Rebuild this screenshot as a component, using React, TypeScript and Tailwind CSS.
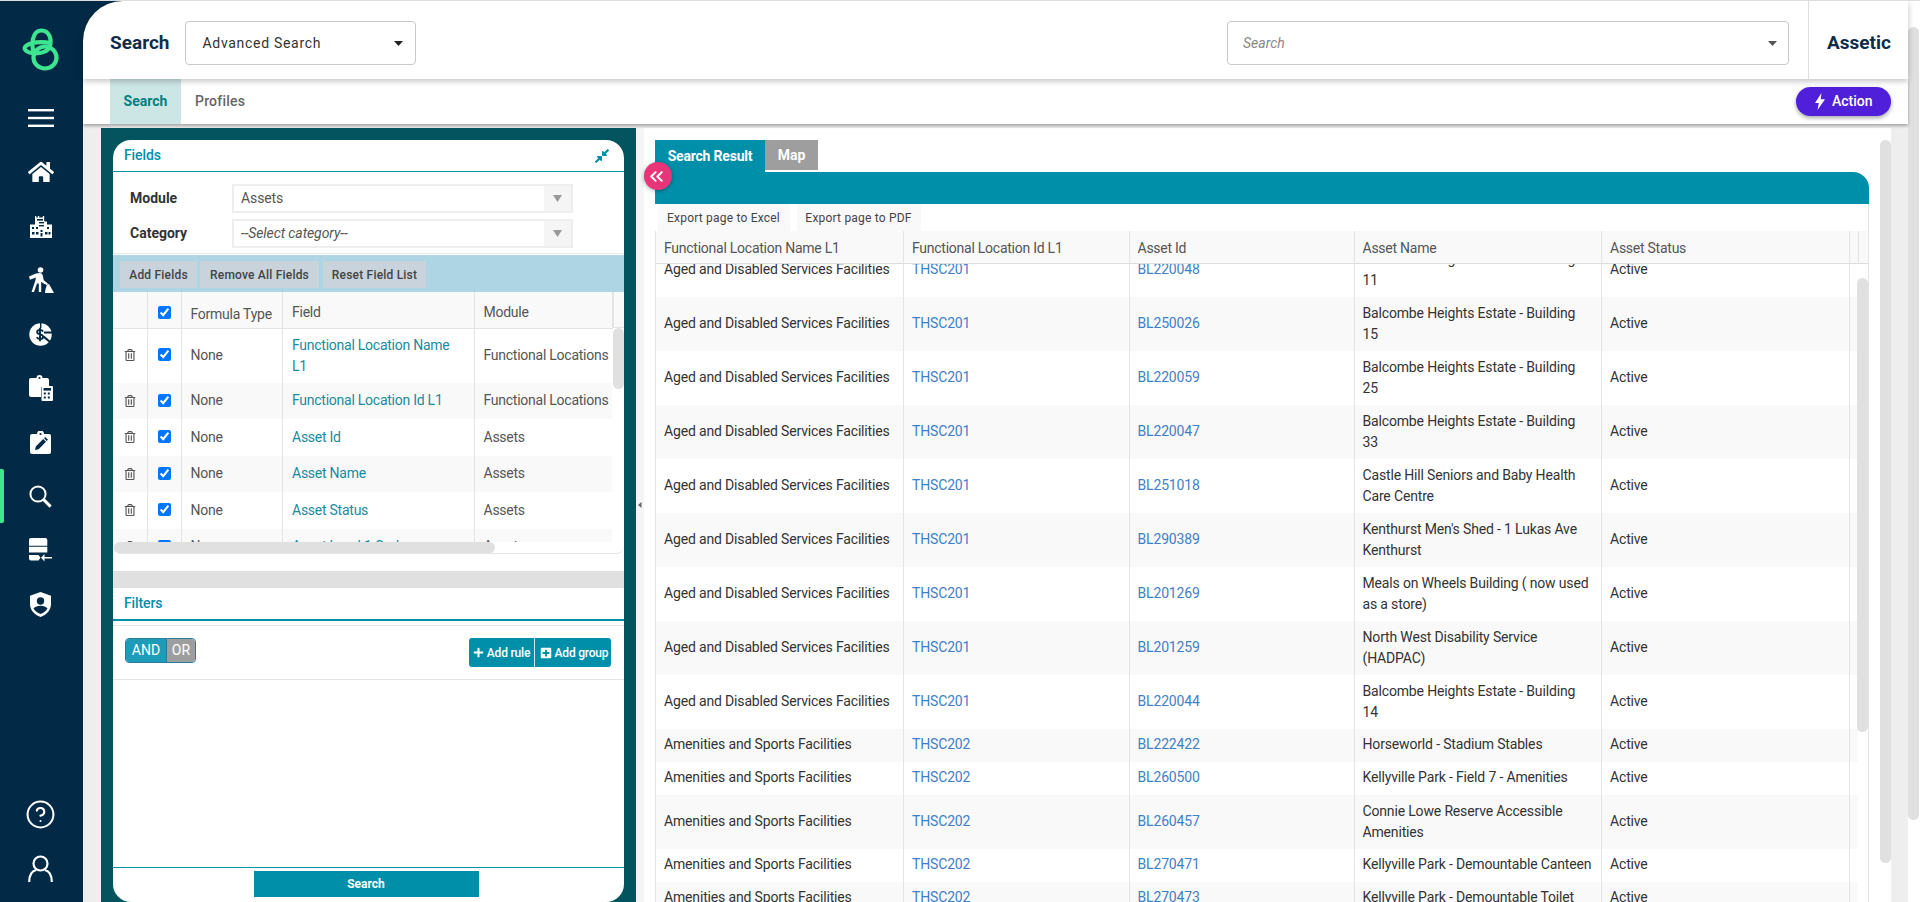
import React from "react";
import { FaHome, FaRegTrashAlt, FaCompressAlt, FaPlus, FaPlusSquare } from "react-icons/fa";
import { ChevronsLeft, CircleHelp } from "lucide-react";

const NAVY = "#022a47";

const Logo = () => (
  <svg width="55" height="55" viewBox="0 0 55 55" fill="none" stroke="#3de58f" strokeWidth="4.2" strokeLinecap="round">
    <ellipse cx="31" cy="36.5" rx="11.5" ry="11" />
    <path d="M20 33 C17 24 18 10 27 9.5 C35 9 38 18 36 25 C34 31 26 33 18 32 C11 31 9 27 12 25 C16 21.5 27 20 36 22" />
  </svg>
);

const Hamburger = () => (
  <svg width="26" height="18" viewBox="0 0 26 18" fill="#fff">
    <rect y="0" width="26" height="2.4" />
    <rect y="7.8" width="26" height="2.4" />
    <rect y="15.6" width="26" height="2.4" />
  </svg>
);

const BuildingIcon = () => (
  <svg width="24" height="23" viewBox="0 0 24 23">
    <path fill="#fff" d="M6 7V1h1.2v1.6h1.6V1h1.4v1.6h3.6V1h1.4v5.4H18v3.2h5V23H1V9.6h5z" />
    <g fill={NAVY}>
      <rect x="8" y="4" width="6" height="1.6" />
      <rect x="10" y="7" width="5" height="1.4" />
      <rect x="10" y="10" width="5" height="1.4" />
      <rect x="3" y="12" width="2" height="2" />
      <rect x="7" y="12" width="2" height="2" />
      <rect x="18" y="12" width="2" height="2" />
      <rect x="3" y="17" width="2.5" height="2.5" />
      <rect x="7" y="17" width="2.5" height="2.5" />
      <rect x="11.5" y="15" width="2" height="2" />
      <rect x="11.5" y="18" width="2" height="3.5" />
      <rect x="16" y="17" width="2.5" height="2.5" />
      <rect x="19.5" y="17" width="2" height="2.5" />
    </g>
  </svg>
);

const WorkerIcon = () => (
  <svg width="26" height="26" viewBox="0 0 26 26" fill="#fff">
    <circle cx="12.500" cy="3" r="2.800" />
    <path d="M1 9.500l7-3 3.500-.5c2 0 3 1 3.300 2.500l1 5.200 2.200 2-1.300 1.600-3.500-2.600v10.300h-2.400v-8.500h-1.800l-3 8.500H3.500l3.800-11.200.6-3.300-6 2.200z" />
    <path d="M21 17l5 9h-9l.6-4.300 1.400-4z" />
    <path d="M9 10l1-1.700 10 8.500-1.400 1.500z" />
  </svg>
);

const DollarIcon = () => (
  <svg width="24" height="23" viewBox="0 0 24 23">
    <circle cx="11.5" cy="11.5" r="11.2" fill="#fff" />
    <path fill={NAVY} d="M11 0h1.4v5H11zM15 8.4h9v2h-9zM15 12.4l7 6-1.4 1.6-6.6-5.4z" />
    <path fill="none" stroke={NAVY} strokeWidth="1.9" d="M14 8.6c-.6-1.2-1.6-1.7-3-1.7-1.7 0-2.9.9-2.9 2.2 0 3 6 1.6 6 4.6 0 1.4-1.3 2.3-3 2.3-1.5 0-2.7-.6-3.3-1.9M11 4.8v13.4" />
  </svg>
);

const ClipCalcIcon = () => (
  <svg width="24" height="26" viewBox="0 0 24 26">
    <path fill="#fff" d="M2 3h5.5a3 3 0 0 1 6 0H18a2 2 0 0 1 2 2v7h-8v10H2a2 2 0 0 1-2-2V5a2 2 0 0 1 2-2z" />
    <circle cx="10.5" cy="3" r="1" fill={NAVY} />
    <rect x="12.5" y="11" width="11.5" height="15" rx="1" fill="#fff" />
    <rect x="14.5" y="13" width="7.5" height="2.6" fill={NAVY} />
    <g fill={NAVY}>
      <rect x="14.8" y="17.5" width="2" height="2" />
      <rect x="18.8" y="17.5" width="2" height="2" />
      <rect x="14.8" y="21.5" width="2" height="2" />
      <rect x="18.8" y="21.5" width="2" height="2" />
    </g>
  </svg>
);

const ClipEditIcon = () => (
  <svg width="21" height="23" viewBox="0 0 21 23">
    <path fill="#fff" d="M2 3h5a3.4 3.4 0 0 1 7 0h5a2 2 0 0 1 2 2v16a2 2 0 0 1-2 2H2a2 2 0 0 1-2-2V5a2 2 0 0 1 2-2z" />
    <circle cx="10.5" cy="3" r="1.1" fill={NAVY} />
    <path fill={NAVY} d="M5 19l.8-3.6 7.4-7.4 2.8 2.8-7.4 7.4zM14 7.2l1.2-1.2 2.8 2.8-1.2 1.2z" />
  </svg>
);

const SearchIcon = () => (
  <svg width="23" height="23" viewBox="0 0 23 23" fill="none" stroke="#fff">
    <circle cx="9" cy="9" r="7.6" strokeWidth="2" />
    <path d="M14.6 14.6l7 7" strokeWidth="3" />
  </svg>
);

const DataIcon = () => (
  <svg width="23" height="24" viewBox="0 0 23 24" fill="#fff">
    <path d="M2 0h14.300a2 2 0 0 1 2 2v5.700H0V2a2 2 0 0 1 2-2zM0 8.800h18.300v5.600H0zM0 17h9.500l2 2.800-2 2.800H2a2 2 0 0 1-2-2z" />
    <path d="M23 19h-7.500v-3L12 19.800l3.500 3.700v-3H23z" />
  </svg>
);

const ShieldIcon = () => (
  <svg width="21" height="25" viewBox="0 0 21 25">
    <path fill="#fff" d="M10.5 0L21 3.8V12c0 6.2-4.4 10.8-10.5 13C4.4 22.800 0 18.200 0 12V3.800z" />
    <circle cx="10.500" cy="9" r="3.700" fill={NAVY} />
    <path fill={NAVY} d="M3.500 16.500c1.500-2 4-2.800 7-2.800s5.500.8 7 2.800c-1.400 2.400-4 4.300-7 5.400-3-1.100-5.600-3-7-5.400z" />
  </svg>
);

const UserIcon = () => (
  <svg width="25" height="27" viewBox="0 0 25 27" fill="none" stroke="#fff" strokeWidth="2.2">
    <circle cx="12.500" cy="8.500" r="7" />
    <path d="M1.200 27c0-6.500 2.500-11 7-12M23.800 27c0-6.500-2.500-11-7-12" />
  </svg>
);

const Caret = ({ color = "#222" }: { color?: string }) => (
  <svg width="9" height="5" viewBox="0 0 9 5"><path d="M0 0h9L4.500 5z" fill={color} /></svg>
);

const NavItem = ({ children, active }: { children: React.ReactNode; active?: boolean }) => (
  <div className="relative flex h-[54px] items-center justify-center pr-[2px]">
    {active && <div className="absolute left-0 top-0 h-[54px] w-[4px] rounded-r-[2px] bg-[#3de58f]" />}
    {children}
  </div>
);

const Sidebar = () => (
  <div className="flex h-full w-[83px] shrink-0 flex-col bg-[#022a47]">
    <div className="flex h-[90px] shrink-0 items-center justify-center pt-[4px]"><Logo /></div>
    <NavItem><Hamburger /></NavItem>
    <NavItem><FaHome size={26} color="#fff" /></NavItem>
    <NavItem><BuildingIcon /></NavItem>
    <NavItem><WorkerIcon /></NavItem>
    <NavItem><DollarIcon /></NavItem>
    <NavItem><ClipCalcIcon /></NavItem>
    <NavItem><ClipEditIcon /></NavItem>
    <NavItem active><SearchIcon /></NavItem>
    <NavItem><DataIcon /></NavItem>
    <NavItem><ShieldIcon /></NavItem>
    <div className="flex-1" />
    <NavItem><CircleHelp size={31} color="#fff" strokeWidth={1.6} /></NavItem>
    <NavItem><UserIcon /></NavItem>
    <div className="h-[7px] shrink-0" />
  </div>
);

const Header = () => (
  <div className="relative z-20 bg-[#022a47]">
    <div className="flex h-[78px] items-center rounded-tl-[40px] bg-white pl-[27px] pt-[6px] shadow-[0_2px_6px_rgba(0,0,0,0.25)]">
      <div className="text-[19px] font-bold text-[#0f2d4a]">Search</div>
      <div className="ml-[16px] flex h-[44px] w-[231px] items-center justify-between rounded-[4px] border border-[#c8c8c8] pl-[16px] pr-[12px] text-[14px] tracking-[0.7px] text-[#333]">
        <span>Advanced Search</span>
        <Caret />
      </div>
      <div className="flex-1" />
      <div className="flex h-[44px] w-[562px] items-center justify-between rounded-[4px] border border-[#c8c8c8] pl-[15px] pr-[11px] text-[14px] italic text-[#888]">
        <span>Search</span>
        <Caret color="#555" />
      </div>
      <div className="-mt-[6px] ml-[19px] flex h-[78px] w-[100px] items-center border-l border-[#ddd] pl-[18px] pt-[6px] text-[19px] font-bold text-[#0f2d4a]">Assetic</div>
    </div>
  </div>
);

const SubTabs = () => (
  <div className="relative z-10 flex h-[45px] items-stretch bg-white pl-[27px] pr-[17px] shadow-[0_2px_3px_rgba(0,0,0,0.3)]">
    <div className="flex w-[71px] items-center justify-center bg-[#cce5e5] text-[14px] font-bold text-[#00807f]">Search</div>
    <div className="ml-[14px] flex items-center text-[14px] font-medium tracking-[0.2px] text-[#666]">Profiles</div>
    <div className="flex-1" />
    <div className="flex h-[29px] w-[95px] items-center self-center rounded-full bg-[#4f1fd9] pl-[19px] text-[14px] font-medium text-white shadow-[0_2px_4px_rgba(0,0,0,0.35)]">
      <svg width="10" height="17" viewBox="0 0 10 17" fill="#fff"><path d="M6.500 0L0 10h3.800L2.500 17 10 6.300H5.700z" /></svg>
      <span className="ml-[7px]">Action</span>
    </div>
  </div>
);

const SelectBox = ({ text, italic }: { text: string; italic?: boolean }) => (
  <div className="flex h-[29px] w-[341px] items-stretch border-2 border-[#eee] text-[14px] font-normal tracking-[-0.1px] text-[#555]">
    <div className={"flex flex-1 items-center pl-[7px] " + (italic ? "italic" : "")}>{text}</div>
    <div className="flex w-[27px] items-center justify-center bg-[#f5f5f5]">
      <svg width="9" height="7" viewBox="0 0 9 7"><path d="M0 0h9L4.500 7z" fill="#999" /></svg>
    </div>
  </div>
);

const fieldRows = [
  ["Functional Location Name L1", "Functional Locations"],
  ["Functional Location Id L1", "Functional Locations"],
  ["Asset Id", "Assets"],
  ["Asset Name", "Assets"],
  ["Asset Status", "Assets"],
  ["Asset Level 1 Code", "Assets"],
];

const td = "border-r border-[#e4e4e4] px-[9px] py-[6px] align-middle";

const FieldsTable = () => (
  <div className="flex h-[250px] overflow-hidden">
    <table className="h-fit w-[499px] shrink-0 table-fixed border-collapse text-[14px] leading-[21px] tracking-[-0.25px] text-[#555]">
      <colgroup>
        <col className="w-[34px]" />
        <col className="w-[34px]" />
        <col className="w-[101.500px]" />
        <col className="w-[191.500px]" />
        <col className="w-[138px]" />
      </colgroup>
      <thead>
        <tr className="h-[36px] border-b border-[#e4e4e4] bg-[#f9f9f9] text-left">
          <th className={td + " font-normal"} />
          <th className="border-r border-[#e4e4e4] pb-[1px] pt-[5px] text-center align-middle font-normal"><input type="checkbox" checked readOnly className="align-middle" /></th>
          <th className={td + " whitespace-nowrap pb-[1px] pt-[11px] font-normal"}>Formula Type</th>
          <th className={td + " pb-[3px] pt-[9px] font-normal"}>Field</th>
          <th className={td + " pb-[3px] pt-[9px] font-normal"}>Module</th>
        </tr>
      </thead>
      <tbody>
        {fieldRows.map((r, i) => (
          <tr key={r[0]} className={(i % 2 ? "bg-[#f9f9f9] " : "bg-white ") + (i === 0 ? "h-[54px]" : "h-[36.500px]")}>
            <td className={td + " text-center"}><FaRegTrashAlt size={12} color="#555" className="-mt-[2px] inline-block" /></td>
            <td className={td + " text-center"}><input type="checkbox" checked readOnly className="-mt-[3px] align-middle" /></td>
            <td className={td}>None</td>
            <td className={td + " text-[#1b8aa0]"}>{r[0]}</td>
            <td className="whitespace-nowrap py-[6px] pl-[9px] align-middle">{r[1]}</td>
          </tr>
        ))}
      </tbody>
    </table>
    <div className="flex flex-1 flex-col">
      <div className="h-[36px] shrink-0 border-b border-l border-[#e4e4e4] bg-[#f9f9f9]" />
      <div className="h-[61px] w-[11px] rounded-[6px] bg-[#e0e0e0]" />
    </div>
  </div>
);

const LeftPanel = () => (
  <div className="flex h-full w-[535px] shrink-0 flex-col bg-[#03545f] px-[12px] pt-[12px]">
    <div className="flex flex-1 flex-col overflow-hidden rounded-[18px] bg-white">
      <div className="flex h-[32px] shrink-0 items-center justify-between border-b border-[#008fa9] pl-[11px] pr-[14px] text-[14px] font-medium tracking-[-0.1px] text-[#008fa9]">
        <span>Fields</span>
        <FaCompressAlt size={16} />
      </div>
      <div className="mt-[12px] flex h-[29px] items-center pl-[16px] text-[14px] font-bold text-[#333]">
        <span className="w-[103px] pl-[1px]">Module</span>
        <SelectBox text="Assets" />
      </div>
      <div className="mt-[6px] flex h-[29px] items-center pl-[16px] text-[14px] font-bold text-[#333]">
        <span className="w-[103px] pl-[1px]">Category</span>
        <SelectBox text="--Select category--" italic />
      </div>
      <div className="mt-[5px] h-[2px] border-t border-[#e8e8e8]" />
      <div className="flex h-[37px] items-start gap-[3px] bg-[#add5e4] pl-[7px] pt-[6px] text-[12px] font-medium tracking-[0.2px] text-[#444]">
        <div className="flex h-[27px] w-[77px] items-center justify-center bg-[#c8d3dc]">Add Fields</div>
        <div className="flex h-[27px] w-[119px] items-center justify-center bg-[#c8d3dc]">Remove All Fields</div>
        <div className="ml-[1px] flex h-[27px] w-[103px] items-center justify-center bg-[#c8d3dc]">Reset Field List</div>
      </div>
      <FieldsTable />
      <div className="h-[12px] shrink-0 rounded-b-[8px] border-b border-[#e4e4e4]">
        <div className="ml-[1px] h-[11px] w-[381px] rounded-[6px] bg-[#e0e0e0]" />
      </div>
      <div className="mt-[17px] h-[17px] shrink-0 bg-[#e0e0e0]" />
      <div className="flex h-[33px] shrink-0 items-center border-b-2 border-[#008fa9] pl-[11px] text-[14px] font-medium tracking-[-0.1px] text-[#008fa9]">Filters</div>
      <div className="mt-[4px] flex h-[55px] shrink-0 items-start justify-between border-y border-[#e4e4e4] pl-[12px] pr-[13px] pt-[12px]">
        <div className="flex h-[25px] w-[71px] overflow-hidden rounded-[4px] border border-[#2a7c9c] text-[14px] text-white">
          <div className="flex w-[40px] items-center justify-center bg-[#1d9cba]">AND</div>
          <div className="flex flex-1 items-center justify-center border-l border-[#2a7c9c] bg-[#9e9e9e]">OR</div>
        </div>
        <div className="flex h-[29px] overflow-hidden rounded-[3px] bg-[#008fa9] text-[12px] font-medium tracking-[-0.2px] text-white">
          <div className="flex w-[66px] items-center justify-center gap-[3px] border-r border-[#cfe6ea]"><FaPlus size={11} /><span>Add rule</span></div>
          <div className="flex w-[76px] items-center justify-center gap-[3px] pl-[2px]"><FaPlusSquare size={12} /><span>Add group</span></div>
        </div>
      </div>
      <div className="flex-1" />
      <div className="flex h-[35px] shrink-0 justify-center border-t border-[#008fa9] pr-[5px] pt-[3px]">
        <div className="flex h-[26px] w-[225px] items-center justify-center bg-[#008fa9] text-[12px] font-bold text-white">Search</div>
      </div>
    </div>
  </div>
);

type Row = [string, string, string, string, boolean];
const A = "Aged and Disabled Services Facilities";
const S = "Amenities and Sports Facilities";
const rows: Row[] = [
  [A, "THSC201", "BL220048", "Balcombe Heights Estate - Building 11", true],
  [A, "THSC201", "BL250026", "Balcombe Heights Estate - Building 15", true],
  [A, "THSC201", "BL220059", "Balcombe Heights Estate - Building 25", true],
  [A, "THSC201", "BL220047", "Balcombe Heights Estate - Building 33", true],
  [A, "THSC201", "BL251018", "Castle Hill Seniors and Baby Health Care Centre", true],
  [A, "THSC201", "BL290389", "Kenthurst Men's Shed - 1 Lukas Ave Kenthurst", true],
  [A, "THSC201", "BL201269", "Meals on Wheels Building ( now used as a store)", true],
  [A, "THSC201", "BL201259", "North West Disability Service (HADPAC)", true],
  [A, "THSC201", "BL220044", "Balcombe Heights Estate - Building 14", true],
  [S, "THSC202", "BL222422", "Horseworld - Stadium Stables", false],
  [S, "THSC202", "BL260500", "Kellyville Park - Field 7 - Amenities", false],
  [S, "THSC202", "BL260457", "Connie Lowe Reserve Accessible Amenities", true],
  [S, "THSC202", "BL270471", "Kellyville Park - Demountable Canteen", false],
  [S, "THSC202", "BL270473", "Kellyville Park - Demountable Toilet", false],
];

const Cols = () => (
  <colgroup>
    <col className="w-[248px]" />
    <col className="w-[225.500px]" />
    <col className="w-[225px]" />
    <col className="w-[247.500px]" />
    <col className="w-[247.500px]" />
    <col className="w-[9px]" />
  </colgroup>
);

const cell = "border-r border-[#e4e4e4] pb-[7px] pl-[8px] pr-[8px] pt-[5px] align-middle";
const wrapped = "border-r border-[#e4e4e4] py-[6px] pl-[8px] pr-[8px] align-middle";

const ResultTable = () => (
  <div className="flex min-h-0 flex-1 flex-col border-r border-[#e4e4e4]">
    <div className="flex h-[33px] shrink-0 border-b border-[#ddd] bg-[#f9f9f9]">
      <table className="h-full w-[1202px] shrink-0 table-fixed border-collapse border-l border-[#e4e4e4] text-[14px] tracking-[-0.25px] text-[#555]">
        <Cols />
        <tbody>
          <tr>
            {["Functional Location Name L1", "Functional Location Id L1", "Asset Id", "Asset Name", "Asset Status", ""].map((h, i) => (
              <td key={i} className="border-r border-[#e4e4e4] pb-[5px] pl-[8px] pr-[8px] pt-[7px] align-middle">{h}</td>
            ))}
          </tr>
        </tbody>
      </table>
    </div>
    <div className="flex min-h-0 flex-1 overflow-hidden">
      <div className="w-[1202px] shrink-0">
        <table className="-mt-[21px] w-full table-fixed border-collapse border-l border-[#e4e4e4] text-[14px] leading-[21px] tracking-[-0.16px] text-[#333]">
          <Cols />
          <tbody>
            {rows.map((r, i) => (
              <tr key={r[2]} className={i % 2 ? "bg-[#f9f9f9]" : "bg-white"}>
                <td className={cell + " whitespace-nowrap"}>{r[0]}</td>
                <td className={cell + " text-[#3f7fc7]"}>{r[1]}</td>
                <td className={cell + " text-[#3f7fc7]"}>{r[2]}</td>
                <td className={r[4] ? wrapped : cell}>{r[3]}</td>
                <td className={cell}>Active</td>
                <td />
              </tr>
            ))}
          </tbody>
        </table>
      </div>
      <div className="flex-1 pt-[14px]">
        <div className="h-[454px] w-[11px] rounded-[6px] bg-[#e0e0e0]" />
      </div>
    </div>
  </div>
);

const RightPanel = () => (
  <div className="flex h-full w-[1247px] shrink-0 bg-white pl-[11px] pt-[12px]">
    <div className="relative flex w-[1214px] shrink-0 flex-col">
      <div className="flex h-[32px] shrink-0 items-start text-[14px] font-bold text-white">
        <div className="flex h-[32px] w-[110px] items-center justify-center bg-[#008fa9] tracking-[-0.2px]">Search Result</div>
        <div className="flex h-[30px] w-[53px] items-center justify-center bg-[#9e9e9e]">Map</div>
      </div>
      <div className="h-[32px] shrink-0 rounded-tr-[16px] bg-[#008fa9]" />
      <div className="flex h-[27px] shrink-0 items-stretch gap-[7px] border-r border-[#e4e4e4] pl-[2.500px] text-[12px] tracking-[0.2px] text-[#444]">
        <div className="flex w-[132px] items-center justify-center bg-[#f9f9f9]">Export page to Excel</div>
        <div className="flex w-[124px] items-center justify-center bg-[#f9f9f9]">Export page to PDF</div>
      </div>
      <ResultTable />
      <div className="absolute -left-[11px] top-[22px] flex h-[28px] w-[28px] items-center justify-center rounded-full bg-[#e8357a] text-white shadow-[0_1px_4px_rgba(0,0,0,0.35)]">
        <ChevronsLeft size={21} strokeWidth={2.4} className="-ml-[3px]" />
      </div>
    </div>
    <div className="ml-[11px] h-[723px] w-[11px] rounded-[6px] bg-[#e0e0e0]" />
  </div>
);

export default function App() {
  return (
    <div className="flex h-[902px] w-[1920px] overflow-hidden border-t border-[#ddd] bg-white font-['Roboto',sans-serif]">
      <Sidebar />
      <div className="flex h-full w-[1825px] shrink-0 flex-col bg-[#eeeeee]">
        <Header />
        <SubTabs />
        <div className="flex min-h-0 flex-1 pl-[18px] pt-[4px]">
          <LeftPanel />
          <div className="flex w-[8px] shrink-0 items-center justify-center bg-[#f5f5f5] pb-[20px]">
            <svg width="4" height="6" viewBox="0 0 4 6"><path d="M3.500 0L0 3l3.500 3z" fill="#666" /></svg>
          </div>
          <RightPanel />
        </div>
      </div>
      <div className="flex-1 pt-[26px]">
        <div className="h-[793px] w-[11px] rounded-[6px] bg-[#e0e0e0]" />
      </div>
    </div>
  );
}
